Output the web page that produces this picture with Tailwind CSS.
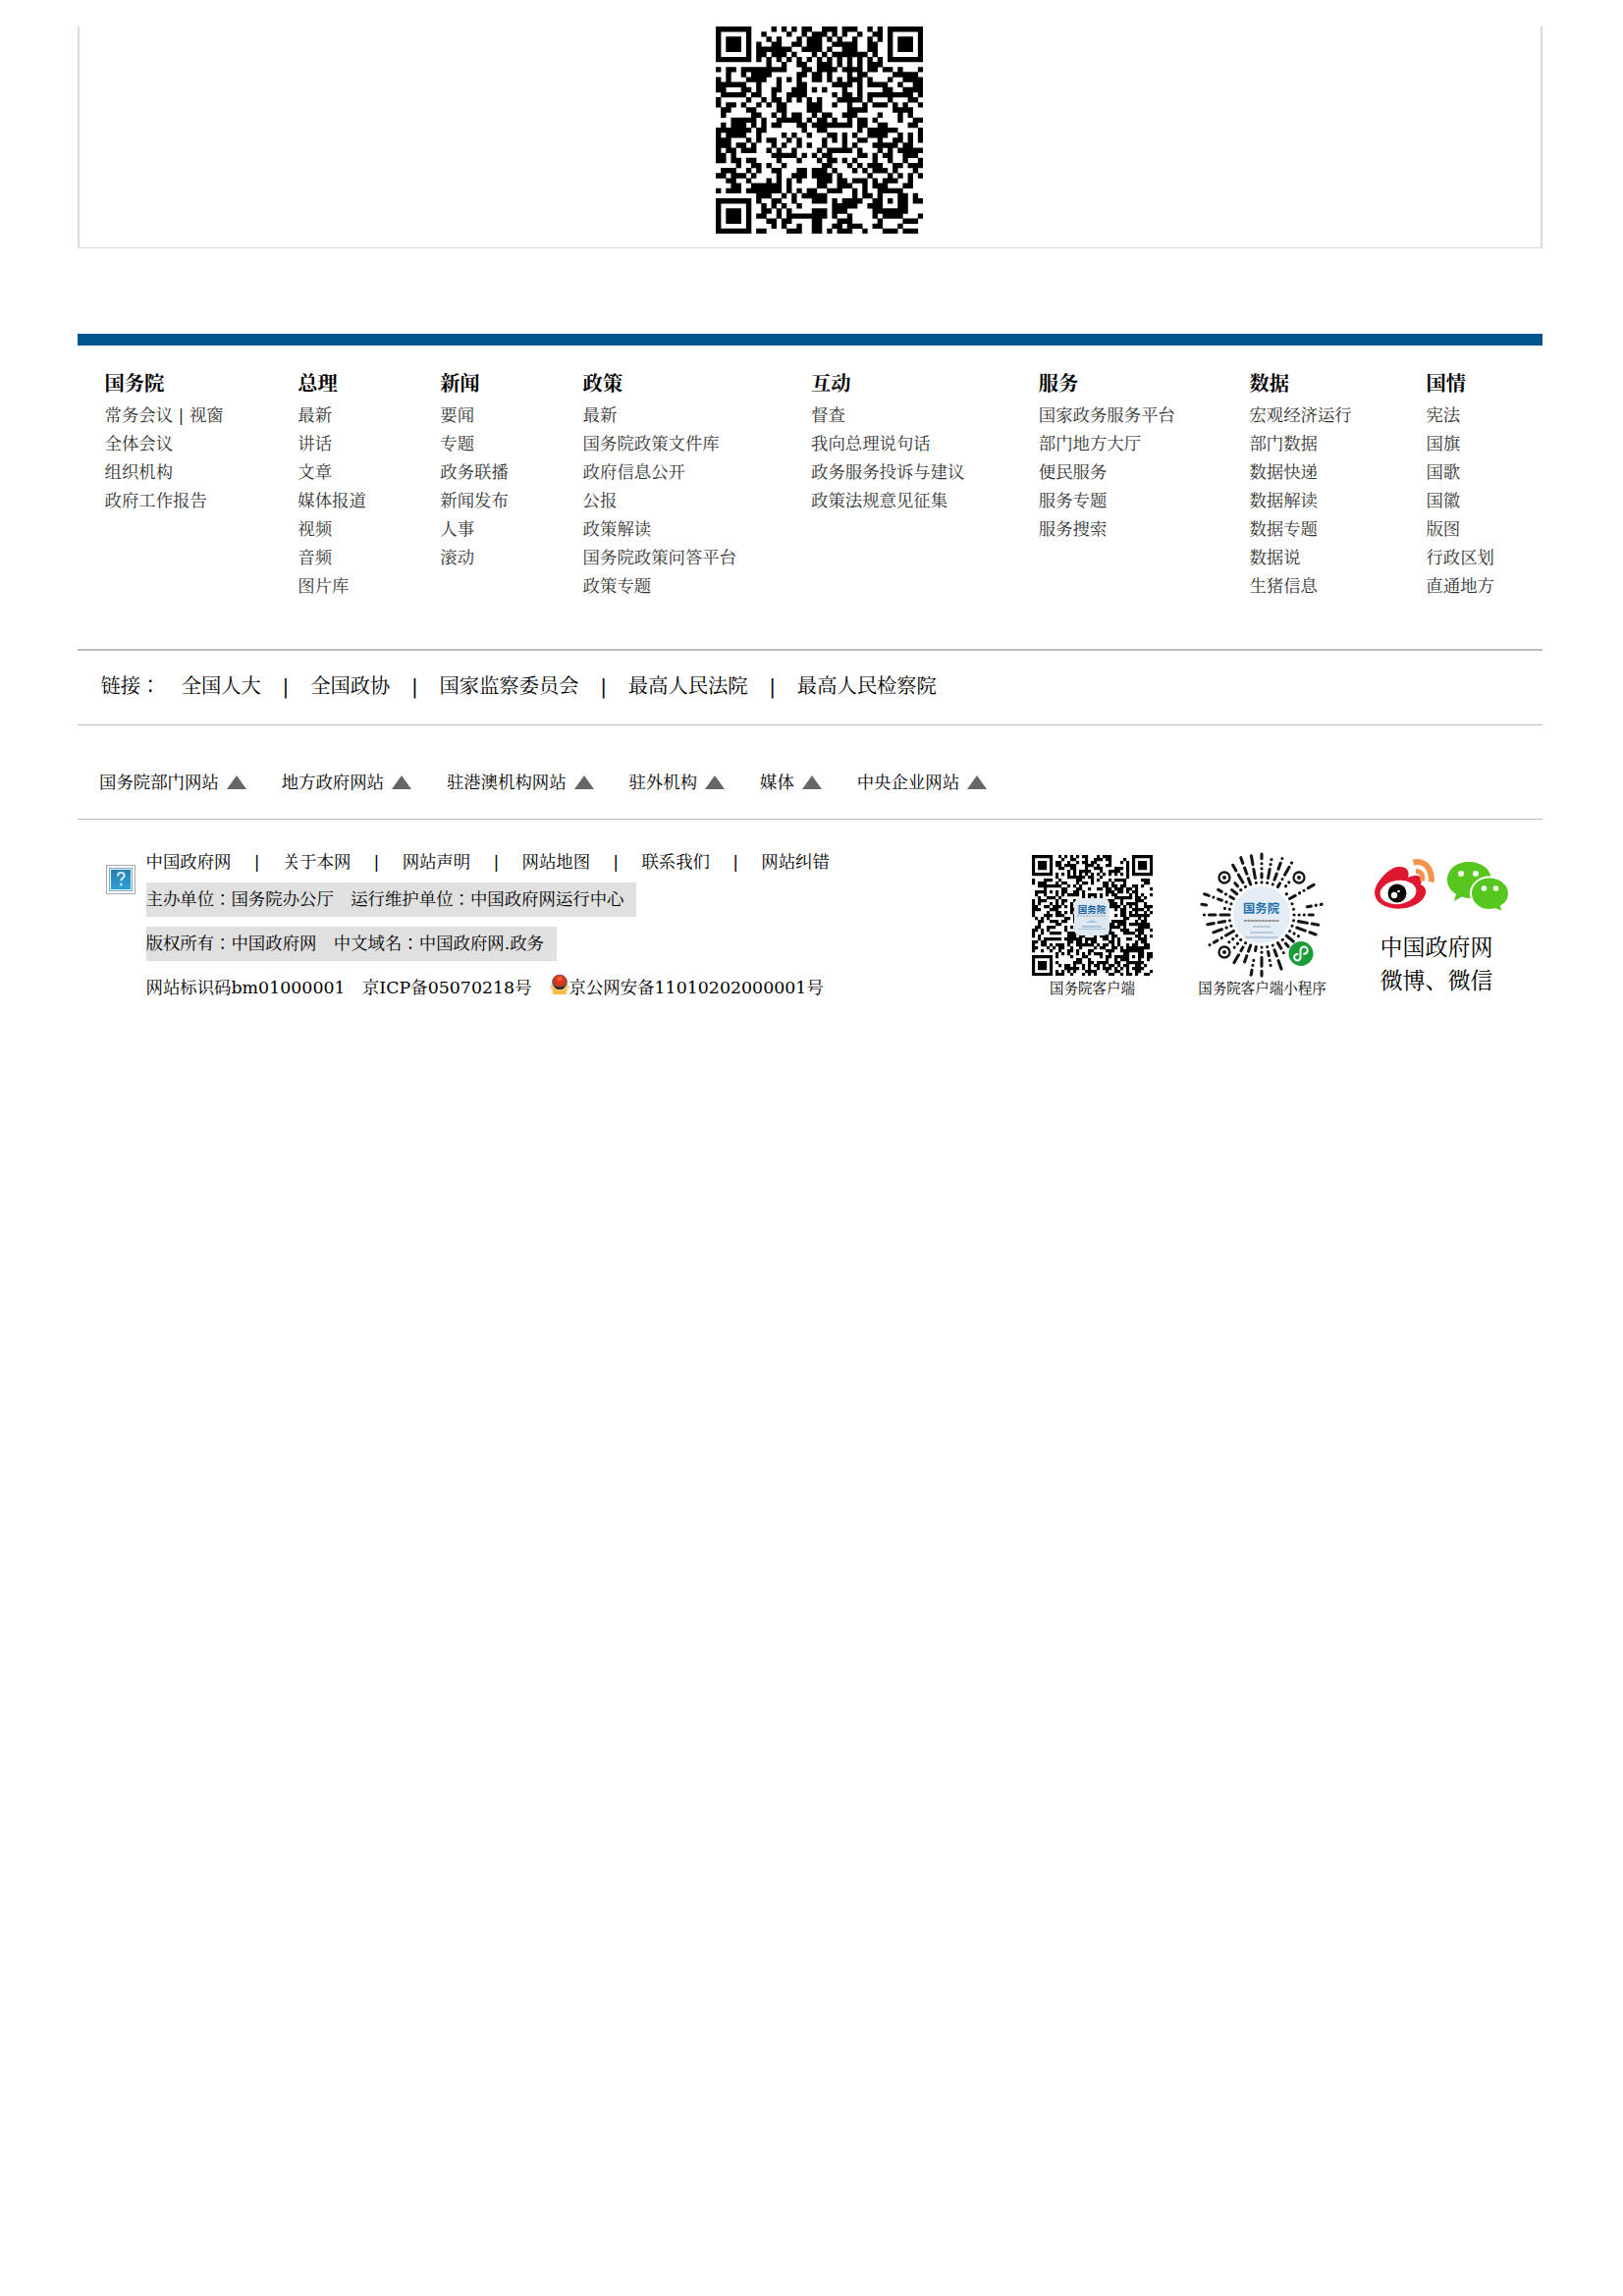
<!DOCTYPE html>
<html lang="ja">
<head>
<meta charset="utf-8">
<title>中国政府网</title>
<script src="https://cdn.jsdelivr.net/npm/@tailwindcss/browser@4"></script>
</head>
<body class="bg-white text-black font-['DejaVu_Serif','Noto_Serif_CJK_JP','Noto_Serif_CJK_SC','Noto_Sans_CJK_JP',serif]">
<main class="ml-[79px] w-[1492px] min-h-[2339px] pt-[27px] whitespace-nowrap">
  <section class="h-[226px] border-x-2 border-b border-[#dadada]">
    <svg id="qr-page" class="ml-[648px] w-[211px] h-[211px]" viewBox="0 0 41 41"></svg>
  </section>

  <div class="mt-[87px] h-3 bg-[#00558e]"></div>

  <nav id="nav" class="flex h-[309px] pt-[23px] pl-[27.5px] text-[17.4px] text-[#333]"></nav>

  <div class="flex items-center h-[77px] border-t-2 border-[#bbb] pl-[23.5px] pb-[2px] text-[20.3px]">
    <span class="w-[82.2px]">链接：</span>
    <span>全国人大</span><span class="w-[50.3px] text-center">|</span>
    <span>全国政协</span><span class="w-[50.3px] text-center">|</span>
    <span>国家监察委员会</span><span class="w-[50.3px] text-center">|</span>
    <span>最高人民法院</span><span class="w-[50.3px] text-center">|</span>
    <span>最高人民检察院</span>
  </div>

  <div id="groups" class="flex items-center gap-[35.9px] h-24 border-t border-[#bbb] pl-[22px] pt-[22px] text-[17.4px]"></div>

  <footer class="flex items-start border-t border-[#bbb] text-[17.4px]">
    <svg class="ml-[29px] mt-[46px] w-[30px] h-[30px] shrink-0" viewBox="0 0 30 30">
      <defs><linearGradient id="blue" x1="0" y1="0" x2="0" y2="1"><stop offset="0" stop-color="#2b7fae"/><stop offset="1" stop-color="#2da0d6"/></linearGradient></defs>
      <rect x=".5" y=".5" width="29" height="29" fill="#fff" stroke="#aaa"/>
      <rect x="3.500" y="3.500" width="23" height="23" fill="#e6f4fb" stroke="#7fa9c2"/>
      <rect x="5" y="5" width="20" height="20" fill="url(#blue)"/>
      <path d="M12 11.500q0-3.500 3.300-3.500t3.300 3q0 1.800-2 2.800-1.300.8-1.300 2.500" fill="none" stroke="#c9e8f7" stroke-width="2.200"/>
      <circle cx="15.300" cy="20" r="1.400" fill="#c9e8f7"/>
    </svg>
    <div class="ml-[10.500px] w-[902.500px] pt-[26px]">
      <div class="flex items-center h-[35px]">
        <span>中国政府网</span><span class="w-[52.300px] text-center">|</span>
        <span>关于本网</span><span class="w-[52.300px] text-center">|</span>
        <span>网站声明</span><span class="w-[52.300px] text-center">|</span>
        <span>网站地图</span><span class="w-[52.300px] text-center">|</span>
        <span>联系我们</span><span class="w-[52.300px] text-center">|</span>
        <span>网站纠错</span>
      </div>
      <div class="flex items-center mt-[3px] w-[499.500px] h-[35px] bg-[#e0e0e0]">主办单位：国务院办公厅　运行维护单位：中国政府网运行中心</div>
      <div class="flex items-center mt-[10px] w-[418.500px] h-[35px] bg-[#e0e0e0]">版权所有：中国政府网　中文域名：中国政府网.政务</div>
      <div class="flex items-center mt-[10px] h-[35px]">
        <span>网站标识码bm01000001　京ICP备05070218号</span>
        <svg class="ml-[18px] mb-[7px] w-5 h-[22px]" viewBox="0 0 20 22">
          <path d="M2 10L0 14l2 2 1 5h14l1-5 2-2-2-4z" fill="#f2d08a"/>
          <path d="M3 15q7 5 14 0l-1 6H4z" fill="#f7bd3c"/>
          <circle cx="10" cy="8.500" r="7.800" fill="#7d5249"/>
          <circle cx="10" cy="7" r="5.800" fill="#e0341c"/>
          <circle cx="10" cy="5" r="2.500" fill="#f4603a"/>
          <path d="M5 12q5 3 10 0l-1 3q-4 2-8 0z" fill="#3a2628"/>
        </svg>
        <span>京公网安备11010202000001号</span>
      </div>
    </div>

    <div class="relative mt-9 w-[123px] text-center text-[14.500px]">
      <svg id="qr-app" class="w-[123px] h-[123px]" viewBox="0 0 41 41"></svg>
      <div class="absolute left-[43px] top-[44px] w-[36px] h-[38px] rounded-md bg-[#dfe8f0] pt-[5px]">
        <div class="text-[9.500px] leading-[12px] font-bold text-[#1764a5] font-['Noto_Sans_CJK_SC',sans-serif]">国务院</div>
        <svg class="mx-auto w-8 h-4" viewBox="0 0 32 16"><path d="M1 1h30" stroke="#8aa6c0" stroke-dasharray="2 1"/><path d="M10 8l6-3 6 3zM6 11h20v2H6zM2 14h28v1H2z" fill="#a9c3dd"/></svg>
      </div>
      <div class="h-[26px] leading-[26px]">国务院客户端</div>
    </div>

    <div class="relative ml-[45.500px] mt-[33px] w-[132px] text-center text-[14.500px]">
      <svg id="mini-code" class="w-[132px] h-[130px]" viewBox="-65 -64 132 130"></svg>
      <div class="absolute left-[37px] top-[49px] w-14 text-[12.300px] leading-[16px] font-bold text-[#1f70ae] font-['Noto_Sans_CJK_SC',sans-serif]">国务院</div>
      <div class="-mt-1 h-[26px] leading-[26px]">国务院客户端小程序</div>
    </div>

    <div class="ml-[47px] mt-10 w-[142px]">
      <div class="flex gap-3">
        <svg class="w-[62px] h-[52px]" viewBox="0 0 62 52">
          <path d="M27 8C20 7 10 15 4 25-3 37 3 47 18 50 35 53 51 45 53 35c1-5-2-7-5-9 3-9-3-11-13-7 2-6-1-11-8-11z" fill="#df1730"/>
          <ellipse cx="25" cy="34" rx="18.500" ry="12" fill="#fff" transform="rotate(-7 25 34)"/>
          <circle cx="24" cy="35" r="9.500" fill="#080808"/>
          <circle cx="21" cy="37" r="3.200" fill="#fff"/><circle cx="25.500" cy="33" r="1.300" fill="#fff"/>
          <path d="M40.500 3.500q10-2 15.500 6 4 7 2.500 14" fill="none" stroke="#f5924c" stroke-width="6"/>
          <path d="M43 12.500q8 0 6.500 10" fill="none" stroke="#f5924c" stroke-width="5"/>
        </svg>
        <svg class="w-[65px] h-[54px]" viewBox="0 0 65 54">
          <path d="M23 3C10 3 1 11 1 21.500c0 6 3.500 11 9 14.500l-2 7 8-4.500q4 1.500 8 1.500c13 0 22-8 22-18.500S36 3 23 3z" fill="#57c720"/>
          <path d="M44 18.500c-11 0-19 7.500-19 16.500s8 17 19 17q3 0 6-.8l8 3-2-6c5-3 8-8 8-13 0-9-9-16.700-20-16.700z" fill="#57c720" stroke="#fff" stroke-width="2"/>
          <g fill="#fff"><circle cx="15" cy="15" r="3"/><circle cx="30" cy="15" r="3"/><circle cx="38.500" cy="30" r="2.800"/><circle cx="50.500" cy="30" r="2.800"/></g>
        </svg>
      </div>
      <div class="mt-[18.500px] ml-[7px] text-[23px] leading-[34px]">中国政府网<br>微博、微信</div>
    </div>
  </footer>
</main>

<script>
const columns = [
  [196.8, '国务院', ['常务会议 | 视窗', '全体会议', '组织机构', '政府工作报告']],
  [145, '总理', ['最新', '讲话', '文章', '媒体报道', '视频', '音频', '图片库']],
  [145.3, '新闻', ['要闻', '专题', '政务联播', '新闻发布', '人事', '滚动']],
  [232.4, '政策', ['最新', '国务院政策文件库', '政府信息公开', '公报', '政策解读', '国务院政策问答平台', '政策专题']],
  [231.8, '互动', ['督查', '我向总理说句话', '政务服务投诉与建议', '政策法规意见征集']],
  [214.6, '服务', ['国家政务服务平台', '部门地方大厅', '便民服务', '服务专题', '服务搜索']],
  [180, '数据', ['宏观经济运行', '部门数据', '数据快递', '数据解读', '数据专题', '数据说', '生猪信息']],
  [100, '国情', ['宪法', '国旗', '国歌', '国徽', '版图', '行政区划', '直通地方']],
];
document.getElementById('nav').innerHTML = columns.map(([w, title, items]) =>
  `<div class="shrink-0" style="width:${w}px"><h3 class="h-[33.5px] leading-[32px] text-[20.3px] font-bold text-black">${title}</h3>` +
  items.map(t => `<div class="h-[29px] leading-[29px]">${t}</div>`).join('') + '</div>').join('');

document.getElementById('groups').innerHTML =
  ['国务院部门网站', '地方政府网站', '驻港澳机构网站', '驻外机构', '媒体', '中央企业网站'].map(t =>
  `<div class="flex items-center gap-2"><span>${t}</span><svg class="w-5 h-[14px]" viewBox="0 0 20 14"><path d="M10 0L20 14H0z" fill="#666"/></svg></div>`).join('');

function rng(seed) {
  return () => (seed = (seed * 1664525 + 1013904223) >>> 0) / 4294967296;
}

function drawQr(id, seed) {
  const n = 41, rand = rng(seed);
  const ring = (x, y, cx, cy) => Math.max(Math.abs(x - cx), Math.abs(y - cy));
  let d = '';
  for (let y = 0; y < n; y++) for (let x = 0; x < n; x++) {
    let on = rand() < 0.5;
    if (x === 6 || y === 6) on = (x + y) % 2 === 0;
    const align = ring(x, y, 34, 34);
    if (align <= 2) on = align !== 1;
    for (const [cx, cy] of [[3, 3], [n - 4, 3], [3, n - 4]]) {
      const r = ring(x, y, cx, cy);
      if (r <= 4) on = r !== 2 && r !== 4;
    }
    if (on) d += `M${x} ${y}h1.05v1.05h-1.05z`;
  }
  document.getElementById(id).innerHTML = `<path d="${d}" fill="#000"/>`;
}
drawQr('qr-page', 2023);
drawQr('qr-app', 77);

(function drawMiniCode() {
  const rand = rng(21), rays = 36;
  const targets = [[-38, -38], [38, -38], [-38, 38]];
  const badge = [40, 39];
  const far = (x, y, p, r) => Math.hypot(x - p[0], y - p[1]) > r;
  let d = '';
  for (let i = 0; i < rays; i++) {
    const a = i * 2 * Math.PI / rays, c = Math.cos(a), s = Math.sin(a);
    const limit = 54 + rand() * 9;
    let r = 33;
    while (r < limit) {
      const len = rand() < 0.45 ? 0.1 : 4 + Math.floor(rand() * 3) * 2.5;
      const end = Math.min(r + len, 62);
      const m = (r + end) / 2;
      if (rand() < 0.88 && targets.every(p => far(m * c, m * s, p, 11)) && far(m * c, m * s, badge, 16))
        d += `M${(r * c).toFixed(1)} ${(r * s).toFixed(1)}L${(end * c).toFixed(1)} ${(end * s).toFixed(1)}`;
      r = end + 5;
    }
  }
  document.getElementById('mini-code').innerHTML =
    `<circle r="29" fill="#e4edf5"/><path d="M-18 6h36" stroke="#9b9290" stroke-width="2" stroke-dasharray="3 .6"/>
     <path d="M-9 12H9M-12 18h24M-17 23h34" stroke="#a8bfd5" stroke-width="1.6"/>
     <path d="${d}" stroke="#161616" stroke-width="3.1" stroke-linecap="round"/>` +
    targets.map(([x, y]) => `<circle cx="${x}" cy="${y}" r="5.500" fill="#fff" stroke="#161616" stroke-width="2.300"/><circle cx="${x}" cy="${y}" r="2" fill="#161616"/>`).join('') +
    `<circle cx="40" cy="39.500" r="12.500" fill="#1b9c36"/>
     <path d="M36.500 40a3.200 3.200 0 1 0 3 3.200v-7a3.600 3.600 0 1 1 3.600 3.600" fill="none" stroke="#fff" stroke-width="2" stroke-linecap="round"/>`;
})();
</script>
</body>
</html>
